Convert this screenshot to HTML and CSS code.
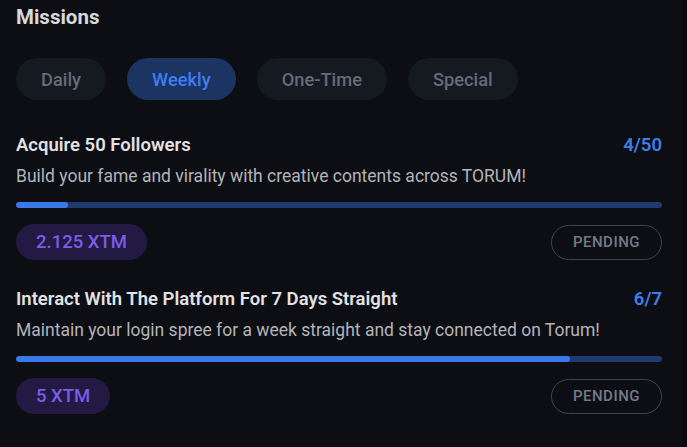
FILE: index.html
```html
<!DOCTYPE html>
<html lang="en">
<head>
  <meta charset="UTF-8" />
  <title>Missions</title>
  <link rel="stylesheet" href="styles.css">
</head>
<body>

  <div class="panel">
    <h1 class="panel-title">Missions</h1>

    <!-- Tabs -->
    <nav class="tabs">
      <button class="tab">Daily</button>
      <button class="tab active">Weekly</button>
      <button class="tab">One-Time</button>
      <button class="tab">Special</button>
    </nav>

    <!-- Mission list -->
    <ul class="missions">
      <li class="mission">
        <div class="mission-head">
          <span class="mission-title">Acquire 50 Followers</span>
          <span class="mission-count">4/50</span>
        </div>
        <p class="mission-desc">Build your fame and virality with creative contents across TORUM!</p>
        <div class="bar"><div class="bar-fill" style="width: 8%"></div></div>
        <div class="mission-foot">
          <span class="reward">2.125 XTM</span>
          <button class="status">PENDING</button>
        </div>
      </li>

      <li class="mission">
        <div class="mission-head">
          <span class="mission-title">Interact With The Platform For 7 Days Straight</span>
          <span class="mission-count">6/7</span>
        </div>
        <p class="mission-desc">Maintain your login spree for a week straight and stay connected on Torum!</p>
        <div class="bar"><div class="bar-fill" style="width: 85.7%"></div></div>
        <div class="mission-foot">
          <span class="reward">5 XTM</span>
          <button class="status">PENDING</button>
        </div>
      </li>
    </ul>
  </div>

</body>
</html>
```

FILE: styles.css
```css
body {
  margin: 0;
  background: #08090c;
  font-family: Roboto, "Liberation Sans", sans-serif;
  height: 447px;
  overflow: hidden;
}
.panel {
  width: 683px;
  height: 447px;
  box-sizing: border-box;
  padding: 5px 21px 0 16px;
  background: #0c0e13;
}
.panel-title {
  margin: 0;
  font-size: 20.5px;
  line-height: 24px;
  font-weight: 700;
  color: #d9d9db;
}
.tabs {
  display: flex;
  gap: 21px;
  margin-top: 29px;
}
.tab {
  height: 42px;
  padding: 0 25px;
  border: none;
  border-radius: 21px;
  background: #151920;
  color: #646b79;
  font-family: inherit;
  font-size: 18.3px;
  font-weight: 500;
}
.tab.active {
  background: #1b3462;
  color: #3f7ef0;
}
.missions {
  list-style: none;
  margin: 33px 0 0;
  padding: 0;
}
.mission + .mission {
  margin-top: 27px;
}
.mission-head {
  display: flex;
  justify-content: space-between;
  align-items: baseline;
  line-height: 24px;
  font-weight: 600;
}
.mission-title {
  color: #e2e2e4;
  font-size: 18.5px;
}
.mission-count {
  color: #3f7fe9;
  font-size: 18.5px;
}
.mission-desc {
  margin: 7px 0 0;
  line-height: 24px;
  font-size: 17.5px;
  color: #b3b5b9;
}
.bar {
  margin-top: 14px;
  height: 6px;
  border-radius: 3px;
  background: #1f3a6d;
  overflow: hidden;
}
.bar-fill {
  height: 100%;
  border-radius: 3px;
  background: #3979ea;
}
.mission-foot {
  display: flex;
  justify-content: space-between;
  align-items: center;
  margin-top: 16px;
}
.reward {
  height: 36px;
  line-height: 36px;
  padding: 0 20px;
  border-radius: 18px;
  background: #221a43;
  color: #7a5ce8;
  font-size: 18.5px;
  font-weight: 500;
}
.status {
  height: 35px;
  padding: 0 21px;
  border: 1px solid #3d4350;
  border-radius: 18px;
  background: transparent;
  color: #747a88;
  font-family: inherit;
  font-size: 15px;
  font-weight: 500;
  letter-spacing: 0.5px;
}
```
